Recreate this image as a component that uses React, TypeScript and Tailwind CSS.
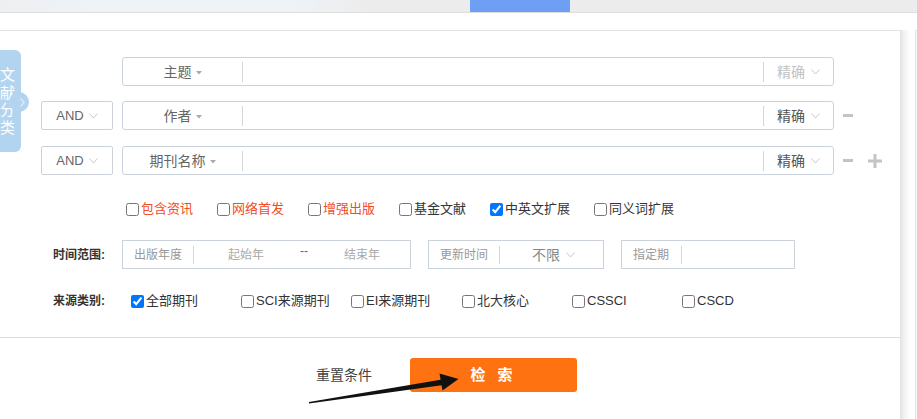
import React from "react";

function Tri() {
  return (
    <svg width="6" height="4" viewBox="0 0 6 4" className="ml-[4px] mt-[2px]">
      <path d="M0 0H6L3 3.5Z" fill="#aaaaaa" />
    </svg>
  );
}

function Chev({ color = "#c8c8c8", className = "" }: { color?: string; className?: string }) {
  return (
    <svg width="9" height="6" viewBox="0 0 9 6" className={className}>
      <path d="M0.5 0.5L4.5 5L8.5 0.5" fill="none" stroke={color} strokeWidth="1" />
    </svg>
  );
}

function Minus() {
  return (
    <svg width="10" height="3" viewBox="0 0 10 3">
      <rect x="0" y="0" width="10" height="3" fill="#c4c4c4" />
    </svg>
  );
}

function Plus() {
  return (
    <svg width="14" height="14" viewBox="0 0 14 14">
      <rect x="0" y="5.5" width="14" height="3" fill="#c4c4c4" />
      <rect x="5.5" y="0" width="3" height="14" fill="#c4c4c4" />
    </svg>
  );
}

function SearchRow({
  field,
  logic,
  light,
  minus,
  plus,
  className = "",
}: {
  field: string;
  logic?: boolean;
  light?: boolean;
  minus?: boolean;
  plus?: boolean;
  className?: string;
}) {
  return (
    <div className={"flex h-[29px] items-center " + className}>
      {logic ? (
        <div className="ml-[41px] flex h-full w-[72px] items-center justify-center rounded-[2px] border border-[#ccd2dc] text-[13px] leading-none text-[#666]">
          AND
          <Chev className="ml-[5px]" />
        </div>
      ) : (
        <div className="ml-[41px] h-full w-[72px]" />
      )}
      <div className="ml-[9px] flex h-full w-[712px] items-center rounded-[3px] border border-[#ccd2dc]">
        <div className="flex w-[119px] items-center justify-center text-[14px] leading-none text-[#666]">
          {field}
          <Tri />
        </div>
        <div className="h-[20px] w-px bg-[#d6d6d6]" />
        <div className="flex-1" />
        <div className="h-[20px] w-px bg-[#d6d6d6]" />
        <div
          className={
            "flex w-[69px] items-center justify-center text-[14px] leading-none " +
            (light ? "text-[#c2c2c2]" : "text-[#555]")
          }
        >
          精确
          <Chev className="ml-[6px]" />
        </div>
      </div>
      {minus && (
        <div className="ml-[9px] flex items-center">
          <Minus />
        </div>
      )}
      {plus && (
        <div className="ml-[15px] flex items-center">
          <Plus />
        </div>
      )}
    </div>
  );
}

function Check({
  label,
  checked,
  red,
  className = "",
}: {
  label: string;
  checked?: boolean;
  red?: boolean;
  className?: string;
}) {
  return (
    <label className={"flex items-center " + className}>
      <input type="checkbox" defaultChecked={checked} className="m-0 h-[13px] w-[13px]" />
      <span
        className={
          "ml-[2px] text-[13px] leading-[20px] " + (red ? "text-[#f24c25]" : "text-[#333]")
        }
      >
        {label}
      </span>
    </label>
  );
}

export default function App() {
  return (
    <div className="relative h-[419px] w-[917px] overflow-hidden bg-white font-['Liberation_Sans','Noto_Sans_CJK_SC',sans-serif]">
      {/* top bar */}
      <div className="h-[13px] border-b border-[#dedede] bg-[linear-gradient(90deg,#eeeff1_0%,#eef3f7_10%,#eef3f7_32%,#ececed_40%,#ececec_100%)]">
        <div className="ml-[470px] h-[12px] w-[100px] bg-[#6e9ff5]" />
      </div>

      <div className="mt-[17px] flex h-[389px]">
        {/* main panel */}
        <div className="relative w-[901px] border-r border-t border-[#e2e2e2]">
          {/* side tab */}
          <div className="absolute left-[-6px] top-[19px] flex h-[102px] w-[27px] flex-col items-center justify-center rounded-r-[6px] bg-[#b3d4ef] text-[15px] leading-[17.5px] text-white">
            <span>文</span>
            <span>献</span>
            <span>分</span>
            <span>类</span>
          </div>
          <div className="absolute left-[9px] top-[61px] flex h-[20px] w-[20px] items-center justify-end rounded-full bg-[#b3d4ef] pr-[4px]">
            <svg width="5" height="9" viewBox="0 0 5 9">
              <path d="M0.6 0.6L4.2 4.5L0.6 8.4" fill="none" stroke="#e3edf7" strokeWidth="1.2" />
            </svg>
          </div>

          {/* form */}
          <div className="flex h-[307px] flex-col border-b border-[#dcdcdc] pt-[26px]">
            <SearchRow field="主题" light />
            <SearchRow field="作者" logic minus className="mt-[15px]" />
            <SearchRow field="期刊名称" logic minus plus className="mt-[16px]" />

            <div className="mt-[24px] flex h-[20px] items-center gap-[24px] pl-[126px]">
              <Check label="包含资讯" red />
              <Check label="网络首发" red />
              <Check label="增强出版" red />
              <Check label="基金文献" />
              <Check label="中英文扩展" checked />
              <Check label="同义词扩展" />
            </div>

            <div className="mt-[21px] flex h-[29px] items-center pl-[53px]">
              <div className="w-[69px] text-[12px] font-bold leading-none text-[#333]">时间范围:</div>
              <div className="flex h-full w-[289px] items-center border border-[#ccd2dc] text-[12px] leading-none">
                <span className="w-[70px] pl-[11px] text-[#999]">出版年度</span>
                <div className="h-[18px] w-px bg-[#d6d6d6]" />
                <span className="ml-[34px] text-[#aaa]">起始年</span>
                <span className="mb-[7px] ml-[36px] text-[#666]">--</span>
                <span className="ml-[36px] text-[#aaa]">结束年</span>
              </div>
              <div className="ml-[17px] flex h-full w-[176px] items-center border border-[#ccd2dc] text-[12px] leading-none">
                <span className="w-[70px] pl-[11px] text-[#999]">更新时间</span>
                <div className="h-[18px] w-px bg-[#d6d6d6]" />
                <span className="ml-[32px] text-[14px] text-[#888]">不限</span>
                <Chev className="ml-[6px]" />
              </div>
              <div className="ml-[17px] flex h-full w-[174px] items-center border border-[#ccd2dc] text-[12px] leading-none">
                <span className="w-[59px] pl-[11px] text-[#999]">指定期</span>
                <div className="h-[18px] w-px bg-[#d6d6d6]" />
              </div>
            </div>

            <div className="mt-[22px] flex h-[20px] items-center pl-[53px]">
              <div className="w-[78px] text-[12px] font-bold leading-none text-[#333]">来源类别:</div>
              <Check label="全部期刊" checked className="w-[110px]" />
              <Check label="SCI来源期刊" className="w-[110px]" />
              <Check label="EI来源期刊" className="w-[111px]" />
              <Check label="北大核心" className="w-[110px]" />
              <Check label="CSSCI" className="w-[110px]" />
              <Check label="CSCD" className="w-[110px]" />
            </div>
          </div>

          {/* buttons */}
          <div className="mt-[20px] flex items-center pl-[316px]">
            <span className="text-[14px] leading-none text-[#444]">重置条件</span>
            <button className="ml-[38px] flex h-[34px] w-[167px] items-center justify-center rounded-[3px] bg-[#ff7212] text-[15px] font-bold tracking-[4px] text-white">
              检 索
            </button>
          </div>
        </div>

        {/* shadow gap */}
        <div className="w-[14px] bg-[linear-gradient(90deg,#e8e8e8_0%,#f6f6f6_35%,#ffffff_70%)]" />
        <div className="flex-1 border-l border-t border-[#e4e4e4] bg-[linear-gradient(90deg,#f2f2f2_0%,#ffffff_100%)]" />
      </div>

      {/* annotation arrow */}
      <svg
        className="pointer-events-none absolute left-0 top-0"
        width="917"
        height="419"
        viewBox="0 0 917 419"
      >
        <polygon points="309,402 442,379.5 443.5,385 309,403.6" fill="#111" />
        <polygon points="439.5,373.5 458.5,379 442.5,390.5" fill="#111" />
      </svg>
    </div>
  );
}
